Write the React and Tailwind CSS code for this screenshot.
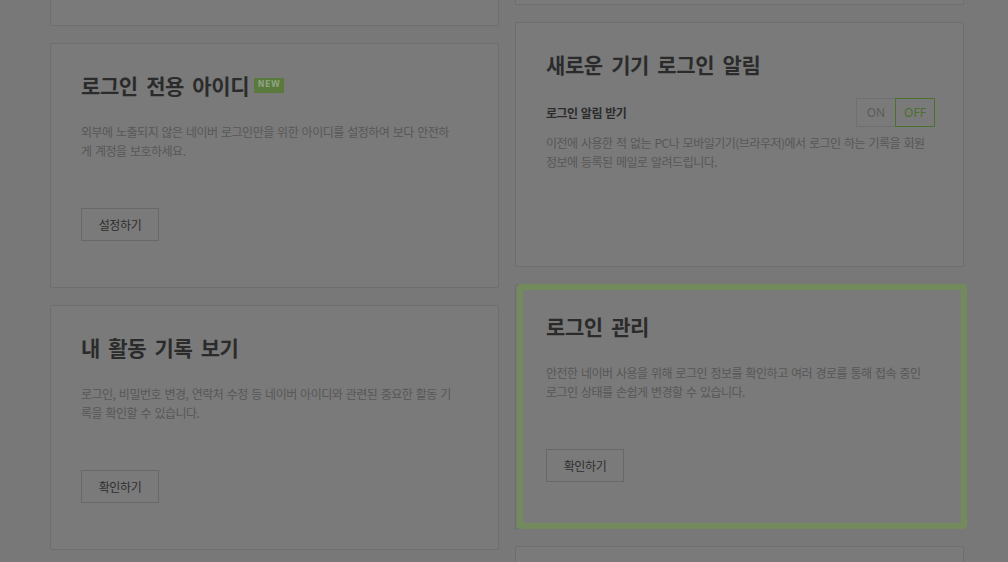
import React from "react";

const KR = "font-['Noto_Sans_CJK_KR',sans-serif]";

function Card({ children, highlight = false }) {
  return (
    <div className="relative h-[245px] shrink-0 rounded-[2px] border border-[#6e6e6e] bg-[#7a7a7a] px-[30px] pt-[27px]">
      {children}
      {highlight && (
        <div className="pointer-events-none absolute top-[-1px] bottom-[-1px] left-[1px] right-[-4px] rounded-[4px] border-[6px] border-[#738b5c]" />
      )}
    </div>
  );
}

function Title({ children }) {
  return (
    <h2 className={`${KR} flex items-center text-[21px] font-bold leading-[28px] tracking-[-0.4px] text-[#2b2b2b] [word-spacing:4px]`}>
      {children}
    </h2>
  );
}

function Desc({ lines, className = "" }) {
  return (
    <p className={`${KR} text-[12px] leading-[19px] tracking-[-0.5px] text-[#575757] [word-spacing:1.2px] whitespace-nowrap ${className}`}>
      {lines.map((l, i) => (
        <React.Fragment key={i}>
          {l}
          {i < lines.length - 1 && <br />}
        </React.Fragment>
      ))}
    </p>
  );
}

function Btn({ children }) {
  return (
    <button className={`${KR} mt-[48px] flex h-[33px] w-[78px] items-center justify-center border border-[#686868] bg-[#7a7a7a] text-[12px] tracking-[-0.4px] text-[#2e2e2e]`}>
      {children}
    </button>
  );
}

export default function App() {
  return (
    <div className="flex h-[562px] w-full gap-[16px] overflow-hidden bg-[#787878] pl-[50px]">
      {/* left column */}
      <div className="flex w-[449px] flex-col gap-[17px]">
        <div className="h-[26px] shrink-0 rounded-b-[2px] border border-t-0 border-[#6e6e6e] bg-[#7a7a7a]" />
        <Card>
          <Title>
            로그인 전용 아이디
            <span className="ml-[5px] flex h-[15px] w-[30px] items-center justify-center bg-[#5a7a3d] font-['DejaVu_Sans',sans-serif] text-[8px] font-bold leading-none tracking-[0.5px] text-[#8ea27e] [word-spacing:0]">
              NEW
            </span>
          </Title>
          <Desc
            className="mt-[23px]"
            lines={[
              "외부에 노출되지 않은 네이버 로그인만을 위한 아이디를 설정하여 보다 안전하",
              "게 계정을 보호하세요.",
            ]}
          />
          <Btn>설정하기</Btn>
        </Card>
        <Card>
          <Title>내 활동 기록 보기</Title>
          <Desc
            className="mt-[23px]"
            lines={[
              "로그인, 비밀번호 변경, 연락처 수정 등 네이버 아이디와 관련된 중요한 활동 기",
              "록을 확인할 수 있습니다.",
            ]}
          />
          <Btn>확인하기</Btn>
        </Card>
      </div>

      {/* right column */}
      <div className="flex w-[449px] flex-col gap-[17px]">
        <div className="h-[5px] shrink-0 rounded-b-[2px] border border-t-0 border-[#6e6e6e] bg-[#7a7a7a]" />
        <Card>
          <Title>새로운 기기 로그인 알림</Title>
          <div className="mt-[20px] mr-[-2px] flex items-center justify-between">
            <span className={`${KR} text-[12px] font-bold tracking-[-0.5px] text-[#2c2c2c] [word-spacing:1px]`}>
              로그인 알림 받기
            </span>
            <div className="flex h-[29px] font-['Noto_Sans',sans-serif] text-[12px]">
              <span className="flex w-[39px] items-center justify-center border border-r-0 border-[#6f6f6f] text-[#5c5c5c]">
                ON
              </span>
              <span className="flex w-[40px] items-center justify-center border border-[#4b712f] text-[#4b712f]">
                OFF
              </span>
            </div>
          </div>
          <Desc
            className="mt-[6px]"
            lines={[
              "이전에 사용한 적 없는 PC나 모바일기기(브라우저)에서 로그인 하는 기록을 회원",
              "정보에 등록된 메일로 알려드립니다.",
            ]}
          />
        </Card>
        <Card highlight>
          <Title>로그인 관리</Title>
          <Desc
            className="mt-[23px]"
            lines={[
              "안전한 네이버 사용을 위해 로그인 정보를 확인하고 여러 경로를 통해 접속 중인",
              "로그인 상태를 손쉽게 변경할 수 있습니다.",
            ]}
          />
          <Btn>확인하기</Btn>
        </Card>
        <Card />
      </div>
    </div>
  );
}
